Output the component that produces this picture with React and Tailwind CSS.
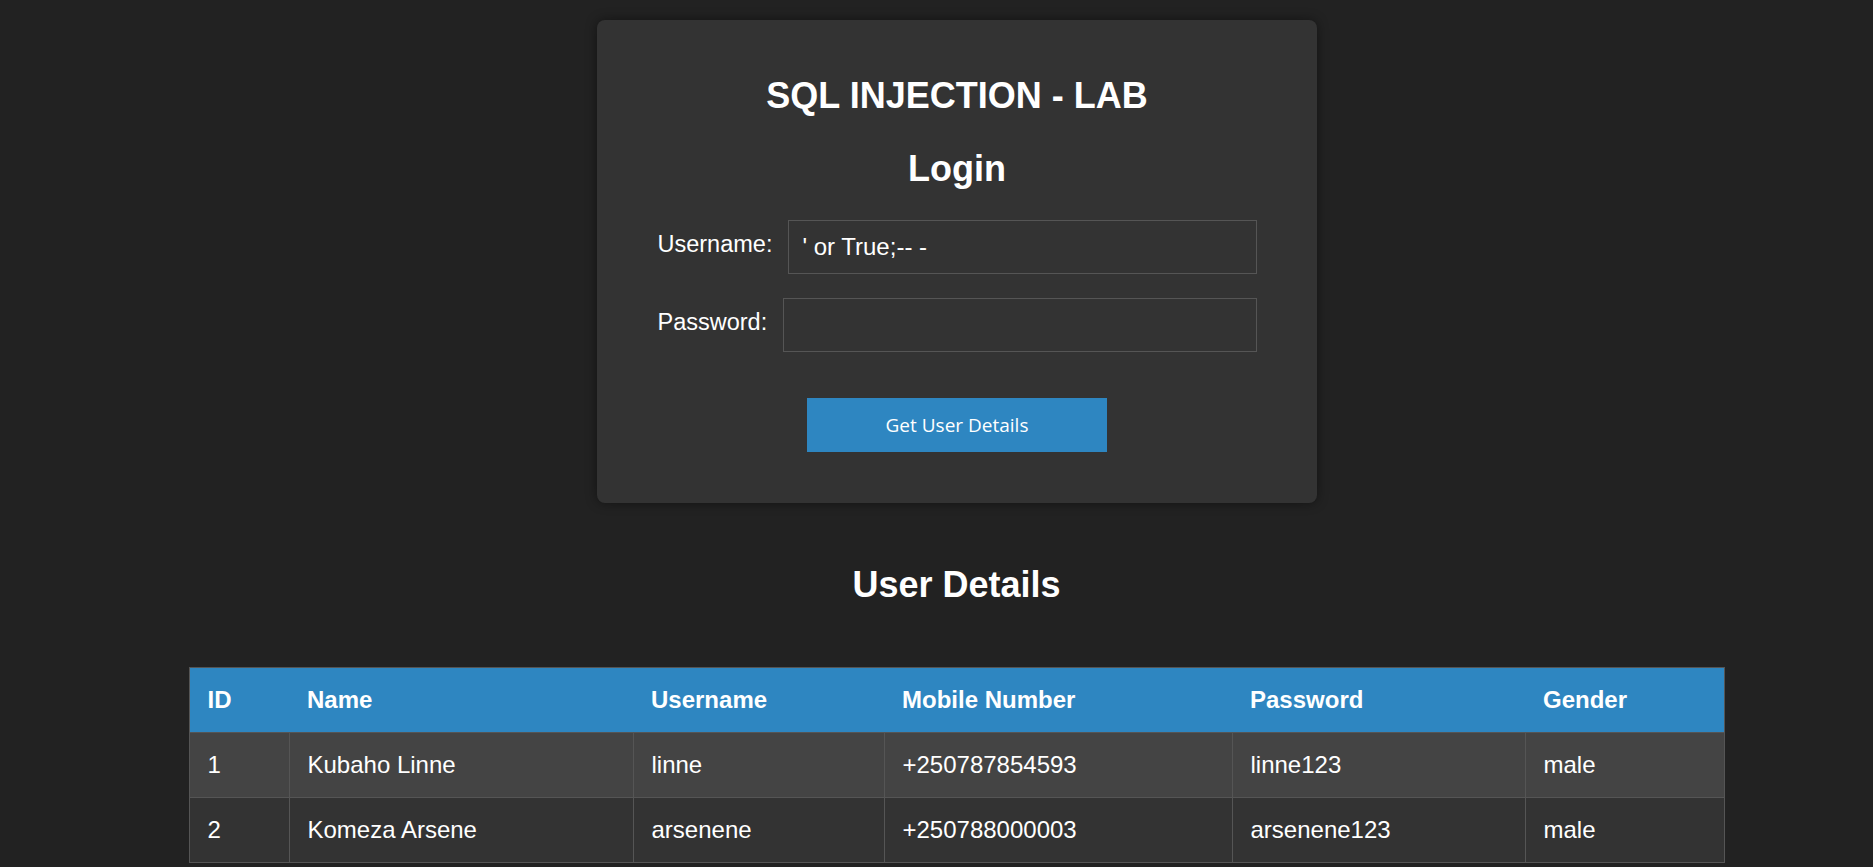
import React, { useState } from 'react';

const users = [
  { id: 1, name: 'Kubaho Linne', username: 'linne', mobile: '+250787854593', password: 'linne123', gender: 'male' },
  { id: 2, name: 'Komeza Arsene', username: 'arsenene', mobile: '+250788000003', password: 'arsenene123', gender: 'male' },
];

const App = () => {
  const [username, setUsername] = useState("' or True;-- -");
  const [password, setPassword] = useState('');

  return (
    <div className="min-h-screen bg-[#222222] pl-[40px] text-white font-['Liberation_Sans',Arial,sans-serif]">
      <div className="flex flex-col items-center pt-[20px]">
        <div className="w-[720px] rounded-lg bg-[#333333] pt-[56px] pb-[51px] pl-[61px] pr-[60px] shadow-[0_0_12px_rgba(0,0,0,0.45)]">
          <h1 className="text-center text-[36px] leading-[40px] font-bold">SQL INJECTION - LAB</h1>
          <h2 className="mt-[33px] text-center text-[36px] leading-[40px] font-bold">Login</h2>

          <div className="mt-[31px] flex items-center">
            <label className="mr-4 mb-[7px] text-[23.5px] leading-[28px]">Username:</label>
            <input
              value={username}
              onChange={(e) => setUsername(e.target.value)}
              className="h-[54px] flex-1 border border-[#555555] bg-[#333333] px-[13px] text-[24px] text-white outline-none"
            />
          </div>

          <div className="mt-[24px] flex items-center">
            <label className="mr-4 mb-[7px] text-[23.5px] leading-[28px]">Password:</label>
            <input
              type="password"
              value={password}
              onChange={(e) => setPassword(e.target.value)}
              className="h-[54px] flex-1 border border-[#555555] bg-[#333333] px-[13px] text-[24px] text-white outline-none"
            />
          </div>

          <div className="mt-[46px] flex justify-center">
            <button className="h-[54px] w-[300px] bg-[#2e86c1] text-[19px] text-white font-['Open_Sans',sans-serif]">
              Get User Details
            </button>
          </div>
        </div>

        <h2 className="mt-[62px] text-center text-[36px] leading-[40px] font-bold">User Details</h2>

        <table className="mt-[62px] w-[1535px] table-fixed border-collapse border border-[#555555] text-left text-[24px] leading-[28px]">
          <colgroup>
            <col className="w-[100px]" />
            <col className="w-[344px]" />
            <col className="w-[251px]" />
            <col className="w-[348px]" />
            <col className="w-[293px]" />
            <col className="w-[199px]" />
          </colgroup>
          <thead>
            <tr className="bg-[#2e86c1]">
              <th className="border-y border-[#555555] px-[18px] py-[18px] font-bold">ID</th>
              <th className="border-y border-[#555555] px-[18px] py-[18px] font-bold">Name</th>
              <th className="border-y border-[#555555] px-[18px] py-[18px] font-bold">Username</th>
              <th className="border-y border-[#555555] px-[18px] py-[18px] font-bold">Mobile Number</th>
              <th className="border-y border-[#555555] px-[18px] py-[18px] font-bold">Password</th>
              <th className="border-y border-[#555555] px-[18px] py-[18px] font-bold">Gender</th>
            </tr>
          </thead>
          <tbody>
            {users.map((u, i) => (
              <tr key={u.id} className={i % 2 === 0 ? 'bg-[#444444]' : 'bg-[#333333]'}>
                <td className="border border-[#555555] px-[18px] py-[18px]">{u.id}</td>
                <td className="border border-[#555555] px-[18px] py-[18px]">{u.name}</td>
                <td className="border border-[#555555] px-[18px] py-[18px]">{u.username}</td>
                <td className="border border-[#555555] px-[18px] py-[18px]">{u.mobile}</td>
                <td className="border border-[#555555] px-[18px] py-[18px]">{u.password}</td>
                <td className="border border-[#555555] px-[18px] py-[18px]">{u.gender}</td>
              </tr>
            ))}
          </tbody>
        </table>
      </div>
    </div>
  );
};

export default App;
